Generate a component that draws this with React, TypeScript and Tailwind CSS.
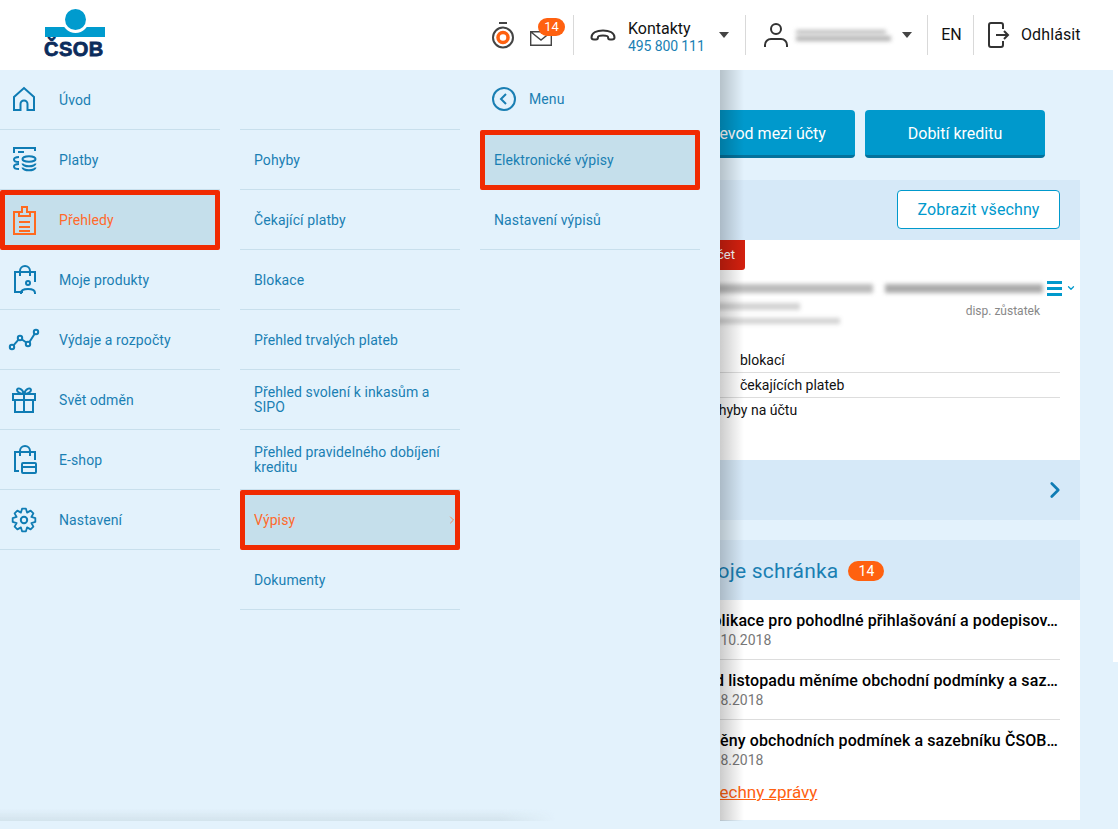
import React from "react";
import { ChevronRight, ChevronDown } from "lucide-react";

const blue = "text-[#1a7fb3]";

function IconBase({ children, className = "text-[#0f7cb4]" }: { children: React.ReactNode; className?: string }) {
  return (
    <svg width="26" height="30" viewBox="0 0 26 30" fill="none" stroke="currentColor" strokeWidth="2" className={className}>
      {children}
    </svg>
  );
}

const HomeIcon = () => (
  <IconBase>
    <path d="M3 25V12L13 3l10 9v13h-6.500v-6a3.500 3.500 0 0 0-7 0v6z" />
  </IconBase>
);
const PaymentsIcon = () => (
  <IconBase>
    <path d="M3 8V3h21v3M7 7h6" />
    <ellipse cx="18" cy="14" rx="6.500" ry="2.800" />
    <path d="M11.500 18.500c0 1.500 3 2.800 6.500 2.800s6.500-1.300 6.500-2.800M11.500 22.500c0 1.500 3 2.800 6.500 2.800s6.500-1.300 6.500-2.800M8 12c-3 0-5 1-5 2.500S5 17 8 17M8 19c-3 0-5 1-5 2.500S5 24 8 24" />
  </IconBase>
);
const ClipboardIcon = () => (
  <IconBase className="text-[#ff6a1f]">
    <path d="M8 7H3v22h21V7h-5" />
    <path d="M8 11V7h3V2h5v5h3v4zM8 17h11M8 22h11M8 26h11" />
  </IconBase>
);
const ProductsIcon = () => (
  <IconBase>
    <path d="M12 27H4V7h20v10M9 11V6a5 5 0 0 1 10 0v5" />
    <circle cx="17" cy="18" r="2" />
    <path d="M10 29v-1c0-3 3-4 7-4s7 1 7 4v1" />
  </IconBase>
);
const ChartIcon = () => (
  <svg width="32" height="24" viewBox="0 0 32 24" fill="none" stroke="currentColor" strokeWidth="2" className="text-[#0f7cb4]">
    <circle cx="4" cy="19" r="2.200" />
    <circle cx="12" cy="10" r="2.200" />
    <circle cx="20" cy="16" r="2.200" />
    <circle cx="28" cy="4" r="2.200" />
    <path d="M5.500 17.300l5-5.600M14 11.500l4.300 3M21.300 14.200l5.400-8.400" />
  </svg>
);
const GiftIcon = () => (
  <IconBase>
    <path d="M4 15v12h18V15M2 9h22v6H2zM13 9v18M13 9C10 9 6 7.500 6 5 6 2.500 11 2.500 13 9zM13 9c3 0 7-1.500 7-4 0-2.500-5-2.500-7 4z" />
  </IconBase>
);
const ShopIcon = () => (
  <IconBase>
    <path d="M8 26H4V7h20v8M9 11V6a5 5 0 0 1 10 0v5" />
    <rect x="11" y="18" width="14" height="10" rx="1" />
    <path d="M11 22h14" />
  </IconBase>
);

// eight-tooth gear outline
const gearPoints = Array.from({ length: 8 }).flatMap((_, i) => {
  const a = (i * Math.PI) / 4;
  const pts = [
    [-0.17, 11.500],
    [0.17, 11.500],
    [0.393, 8],
  ];
  return pts.map(([d, r]) => `${(13 + r * Math.sin(a + d)).toFixed(2)},${(15 - r * Math.cos(a + d)).toFixed(2)}`);
});
const GearIcon = () => (
  <IconBase>
    <circle cx="13" cy="15" r="3.200" />
    <polygon points={gearPoints.join(" ")} strokeLinejoin="round" strokeWidth="1.800" />
  </IconBase>
);

const mainMenu = [
  { label: "Úvod", icon: <HomeIcon /> },
  { label: "Platby", icon: <PaymentsIcon /> },
  { label: "Přehledy", icon: <ClipboardIcon />, active: true },
  { label: "Moje produkty", icon: <ProductsIcon /> },
  { label: "Výdaje a rozpočty", icon: <ChartIcon /> },
  { label: "Svět odměn", icon: <GiftIcon /> },
  { label: "E-shop", icon: <ShopIcon /> },
  { label: "Nastavení", icon: <GearIcon /> },
];

const subMenu = [
  { label: "Pohyby" },
  { label: "Čekající platby" },
  { label: "Blokace" },
  { label: "Přehled trvalých plateb" },
  { label: "Přehled svolení k inkasům a SIPO" },
  { label: "Přehled pravidelného dobíjení kreditu" },
  { label: "Výpisy", active: true },
  { label: "Dokumenty" },
];

const messages = [
  { title: "Aplikace pro pohodlné přihlašování a podepisov…", date: "29.10.2018" },
  { title: "Od listopadu měníme obchodní podmínky a saz…", date: "28.8.2018" },
  { title: "Změny obchodních podmínek a sazebníku ČSOB…", date: "28.8.2018" },
];

function Blurred({ className }: { className: string }) {
  return <div className={`bg-[#8f8f8f] blur-[2px] ${className}`} />;
}

function Header() {
  return (
    <header className="relative z-10 flex h-[70px] shrink-0 items-center bg-white text-[#111]">
      <div className="relative ml-[44px] h-[70px] w-[62px]">
        <div className="absolute left-[1px] top-[27px] h-[10px] w-[60px] bg-[#009bce]" />
        <div className="absolute left-[21px] top-[9px] h-[21px] w-[21px] rounded-full bg-[#009bce] ring-[3px] ring-white" />
        <div className="absolute left-0 top-[37px] font-['Liberation_Sans',sans-serif] text-[20px] font-bold leading-[24px] tracking-[0.5px] text-[#0c2c5c] [-webkit-text-stroke:0.8px_#0c2c5c]">
          ČSOB
        </div>
      </div>

      <div className="ml-[385px] flex h-[40px] items-center">
        <svg width="24" height="30" viewBox="0 0 24 30" fill="none" className="mt-[2px]">
          <path d="M8 2h8" stroke="#444" strokeWidth="2" />
          <circle cx="12" cy="16.500" r="10" stroke="#444" strokeWidth="2" />
          <circle cx="12" cy="16.500" r="5" stroke="#ff6110" strokeWidth="3.500" />
        </svg>
        <div className="relative ml-[14px] mr-[8px] h-[40px] w-[36px]">
          <svg width="22" height="15" viewBox="0 0 22 15" fill="none" className="absolute left-[1px] top-[16px]">
            <path d="M.7.7h20.600v13.600H.7zM.7.7L11 9 21.300.7" stroke="#444" strokeWidth="1.400" />
          </svg>
          <span className="absolute left-[9px] top-[3px] flex h-[18px] w-[27px] items-center justify-center rounded-full bg-[#ff6110] text-[13px] text-white">
            14
          </span>
        </div>
        <div className="h-[40px] w-px bg-[#d9d9d9]" />
        <svg width="26" height="12" viewBox="0 0 26 12" fill="none" className="ml-[16px]" stroke="#333" strokeWidth="2">
          <path d="M1.500 8.500C1.500 3.500 7 1.500 13 1.500s11.500 2 11.500 7c0 1.500-1 2-2.500 2h-2c-1.500 0-2-1-2-2.500 0-1-2-1.500-5-1.500s-5 .5-5 1.500c0 1.500-.5 2.500-2 2.500H4c-1.500 0-2.500-.5-2.500-2z" />
        </svg>
        <div className="ml-[12px] mt-[3px] w-[91px]">
          <div className="text-[16px] leading-[18px]">Kontakty</div>
          <div className={`whitespace-nowrap text-[14px] leading-[16px] tracking-[-0.1px] ${blue}`}>495 800 111</div>
        </div>
        <div className="h-0 w-0 border-x-[5px] border-t-[6px] border-x-transparent border-t-[#444]" />
        <div className="ml-[16px] h-[40px] w-px bg-[#d9d9d9]" />
        <svg width="24" height="26" viewBox="0 0 24 26" fill="none" stroke="#333" strokeWidth="2" className="ml-[18px]">
          <circle cx="12" cy="7" r="5" />
          <path d="M1 25v-2a6 6 0 0 1 6-6h10a6 6 0 0 1 6 6v2" />
        </svg>
        <div className="ml-[8px] w-[95px]">
          <Blurred className="h-[4px] w-[90px] opacity-60" />
          <Blurred className="mt-[2px] h-[5px] w-[95px] opacity-70" />
        </div>
        <div className="ml-[11px] h-0 w-0 border-x-[5px] border-t-[6px] border-x-transparent border-t-[#444]" />
        <div className="ml-[15px] h-[40px] w-px bg-[#d9d9d9]" />
        <div className="w-[45px] pl-[2px] text-center text-[16px]">EN</div>
        <div className="h-[40px] w-px bg-[#d9d9d9]" />
        <svg width="22" height="26" viewBox="0 0 22 26" fill="none" stroke="#333" strokeWidth="2" className="ml-[14px]">
          <path d="M15 7V3a2 2 0 0 0-2-2H3a2 2 0 0 0-2 2v20a2 2 0 0 0 2 2h10a2 2 0 0 0 2-2v-4M8 13h12M16 9l4 4-4 4" />
        </svg>
        <div className="ml-[11px] text-[16px] tracking-[0.1px]">Odhlásit</div>
      </div>
    </header>
  );
}

function Card({ head, children }: { head: React.ReactNode; children: React.ReactNode }) {
  return (
    <section>
      <div className="flex h-[60px] items-center bg-[#d6e9f8] px-5">{head}</div>
      <div className="bg-white">{children}</div>
    </section>
  );
}

function Content() {
  return (
    <div className="ml-[675px] mr-[38px] pt-[40px]">
      <div className="flex gap-[10px]">
        {["Převod mezi účty", "Dobití kreditu"].map((label) => (
          <button
            key={label}
            className="h-[48px] w-[180px] rounded-[4px] border-b-[3px] border-[#04729c] bg-[#0099cc] pt-[2px] text-[16px] text-white"
          >
            {label}
          </button>
        ))}
      </div>

      <div className="mt-[22px]">
        <Card
          head={
            <button className="mb-[1px] ml-auto h-[39px] w-[163px] rounded-[4px] border border-[#0099cc] bg-white text-[16px] tracking-[0.1px] text-[#0099cc]">
              Zobrazit všechny
            </button>
          }
        >
          <div className="relative h-[220px] px-5 text-[14px] text-[#111]">
            <div className="ml-[-20px] flex h-[30px] w-[70px] items-center justify-end whitespace-nowrap rounded-br-[3px] bg-[#d2200f] pr-[10px] text-[13px] text-white">
              účet
            </div>
            <div className="mt-[14px] flex items-center">
              <Blurred className="h-[9px] w-[178px] opacity-60" />
              <Blurred className="ml-[12px] h-[9px] w-[158px] opacity-75" />
              <div className="absolute right-[4px] top-[41px] flex items-center gap-[4px]">
                <div className="flex w-[15px] flex-col gap-[3.500px]">
                  <div className="h-[2.500px] bg-[#0099cc]" />
                  <div className="h-[2.500px] bg-[#0099cc]" />
                  <div className="h-[2.500px] bg-[#0099cc]" />
                </div>
                <ChevronDown size={10} strokeWidth={3} className="text-[#0099cc]" />
              </div>
            </div>
            <div className="mt-[10px] flex justify-between">
              <Blurred className="h-[7px] w-[105px] opacity-40" />
              <div className="mr-[20px] text-[12px] leading-[16px] text-[#888]">disp. zůstatek</div>
            </div>
            <Blurred className="mt-[-1px] h-[6px] w-[145px] opacity-40" />
            <div className="mt-[24px] h-[25px] border-b border-[#ddd] pl-[45px] leading-[25px]">blokací</div>
            <div className="h-[25px] border-b border-[#ddd] pl-[45px] leading-[25px]">čekajících plateb</div>
            <div className="h-[25px] pl-[7px] leading-[25px]">Pohyby na účtu</div>
          </div>
          <div className="flex h-[60px] items-center justify-end bg-[#d6e9f8] pr-[12px]">
            <ChevronRight size={26} strokeWidth={2.500} className="text-[#0f7cb4]" />
          </div>
        </Card>
      </div>

      <div className="mt-[20px]">
        <Card
          head={
            <div className="ml-[4px] mt-[2px] flex items-center gap-[10px]">
              <span className="pt-[1px] text-[21px] tracking-[0.2px] text-[#1a7fb3]">Moje schránka</span>
              <span className="flex h-[20px] w-[36px] items-center justify-center rounded-full bg-[#ff6110] text-[14px] text-white">14</span>
            </div>
          }
        >
          <div className="h-[220px] px-5">
            {messages.map((m, i) => (
              <div key={m.title} className={`h-[60px] pt-[11px] ${i < 2 ? "border-b border-[#ddd]" : ""}`}>
                <div className="flex justify-end whitespace-nowrap pr-[2px] text-[16px] font-medium leading-[20px] tracking-[0.1px] text-black">{m.title}</div>
                <div className="mt-[-1px] pl-[6px] text-[14px] leading-[20px] text-[#777]">{m.date}</div>
              </div>
            ))}
            <a className="mt-[2px] block pl-[5px] text-[17px] leading-[20px] text-[#ff6110] underline">Všechny zprávy</a>
          </div>
        </Card>
      </div>
    </div>
  );
}

function Row({ active, outlined, children }: { active?: boolean; outlined?: boolean; children: React.ReactNode }) {
  const cls = active
    ? "border-[5px] border-[#f02a00] bg-[#c5dfeb] rounded-[2px] text-[#ff6a2b]"
    : outlined
      ? "border-[5px] border-[#f02a00] bg-[#c5dfeb] rounded-[2px] text-[#1a7fb3]"
      : "border-b border-[#c8dfec] pt-[1px] text-[#1a7fb3]";
  return <div className={`relative flex h-[60px] items-center text-[14px] leading-[15px] tracking-[0.1px] ${cls}`}>{children}</div>;
}

function Menu() {
  return (
    <nav className="absolute left-0 top-0 flex h-[751px] w-[720px] gap-5 bg-[#e3f2fc]">
      <div className="w-[220px]">
        {mainMenu.map((item) => (
          <Row key={item.label} active={item.active}>
            <span className={`flex w-[59px] justify-center pr-[12px] ${item.active ? "ml-[-5px]" : ""}`}>{item.icon}</span>
            {item.label}
          </Row>
        ))}
      </div>
      <div className="w-[220px]">
        <div className="h-[60px] border-b border-[#c8dfec]" />
        {subMenu.map((item) => (
          <Row key={item.label} active={item.active}>
            <span className={item.active ? "pl-[9px] pr-[10px]" : "pl-[14px] pr-[10px]"}>{item.label}</span>
            {item.active && <ChevronRight size={12} strokeWidth={1.500} className="absolute right-[-3px] text-[#ff6a2b]" />}
          </Row>
        ))}
      </div>
      <div className="w-[220px]">
        <div className="flex h-[58px] items-center pl-[12px] text-[14px] tracking-[0.1px] text-[#1a7fb3]">
          <svg width="24" height="24" viewBox="0 0 24 24" fill="none" stroke="currentColor" strokeWidth="2">
            <circle cx="12" cy="12" r="11" />
            <path d="M14 7l-5 5 5 5" />
          </svg>
          <span className="ml-[13px]">Menu</span>
        </div>
        <div className="h-[2px]" />
        <Row outlined>
          <span className="pl-[9px]">Elektronické výpisy</span>
        </Row>
        <Row>
          <span className="pl-[14px]">Nastavení výpisů</span>
        </Row>
      </div>
      <div className="absolute bottom-0 left-0 h-[12px] w-[555px] bg-gradient-to-b from-transparent to-[#d3e3ec] [mask-image:linear-gradient(to_right,black_90%,transparent)]" />
      <div className="absolute left-full top-0 h-full w-[24px] bg-gradient-to-r from-[rgba(0,0,0,0.2)] to-transparent" />
    </nav>
  );
}

export default function App() {
  return (
    <div className="flex h-[829px] w-[1118px] flex-col overflow-hidden font-['Roboto',sans-serif]">
      <Header />
      <main className="relative flex-1 bg-[#e3f2fc]">
        <div className="absolute right-0 top-0 h-[592px] w-[5px] bg-white" />
        <Content />
        <Menu />
      </main>
    </div>
  );
}
